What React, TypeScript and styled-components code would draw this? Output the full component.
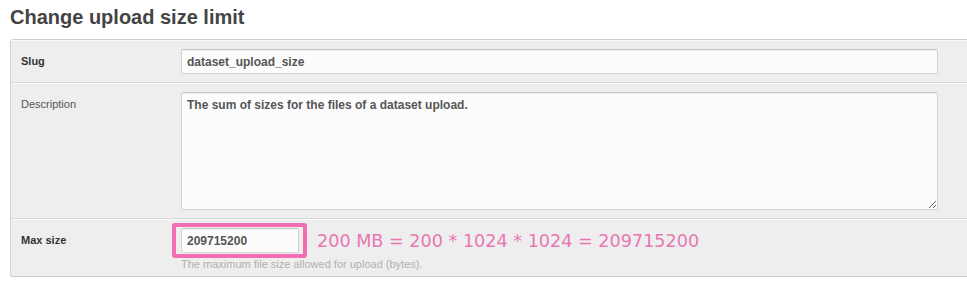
import React from "react";
import styled, { createGlobalStyle } from "styled-components";

const Global = createGlobalStyle`
  html, body { margin: 0; padding: 0; background: #fff; overflow: hidden; }
  body { font-family: "Liberation Sans", Arial, sans-serif; }
`;

const Page = styled.div`
  padding: 5px 0 0 10px;
  width: 980px;
`;

const Title = styled.h1`
  margin: 0 0 10px 0;
  font-size: 20px;
  line-height: 24px;
  font-weight: bold;
  color: #444;
`;

const Panel = styled.div`
  background: #eeeeee;
  border: 1px solid #cfcfcf;
  border-right: none;
  border-radius: 3px 0 0 3px;
`;

const Row = styled.div<{ $last?: boolean }>`
  display: flex;
  padding: 8px 0 ${(p) => (p.$last ? "5px" : "8px")} 10px;
  border-top: 1px solid #fafafa;
  border-bottom: ${(p) => (p.$last ? "none" : "1px solid #d8d8d8")};
`;

const Label = styled.div<{ $bold?: boolean }>`
  width: 160px;
  flex: none;
  font-size: 11px;
  line-height: 24px;
  font-weight: ${(p) => (p.$bold ? "bold" : "normal")};
  color: ${(p) => (p.$bold ? "#333" : "#555")};
`;

const Field = styled.div`
  width: 757px;
  flex: none;
`;

const inputBase = `
  box-sizing: border-box;
  border: 1px solid #d2d2d2;
  border-top-color: #c4c4c4;
  border-radius: 2px;
  background: #fcfcfc;
  box-shadow: inset 0 1px 2px rgba(0,0,0,0.06);
  font-family: "Liberation Sans", Arial, sans-serif;
  font-size: 12px;
  font-weight: bold;
  color: #555;
  padding: 0 5px;
  outline: none;
`;

const TextInput = styled.input<{ $w?: number }>`
  ${inputBase}
  display: block;
  width: ${(p) => (p.$w ? `${p.$w}px` : "100%")};
  height: 25px;
`;

const TextArea = styled.textarea`
  ${inputBase}
  display: block;
  width: 100%;
  height: 118px;
  padding: 5px;
  resize: both;
`;

const InlineRow = styled.div`
  display: flex;
  align-items: center;
  gap: 18px;
`;

const Highlight = styled.div`
  position: relative;
`;

const PinkBox = styled.div`
  position: absolute;
  left: -9px;
  top: -5px;
  right: -8px;
  bottom: -5px;
  border: 4px solid #f26db2;
  border-radius: 3px;
  pointer-events: none;
`;

const Note = styled.span`
  font-family: "DejaVu Sans", sans-serif;
  font-size: 17.6px;
  line-height: 20px;
  color: #e878b4;
`;

const Help = styled.div`
  margin-top: 5px;
  font-size: 11px;
  line-height: 13px;
  color: #b0b0b0;
`;

export default function App() {
  return (
    <Page>
      <Global />
      <Title>Change upload size limit</Title>
      <Panel>
        <Row>
          <Label $bold>Slug</Label>
          <Field>
            <TextInput readOnly value="dataset_upload_size" />
          </Field>
        </Row>
        <Row>
          <Label>Description</Label>
          <Field>
            <TextArea readOnly value="The sum of sizes for the files of a dataset upload." />
          </Field>
        </Row>
        <Row $last>
          <Label $bold>Max size</Label>
          <Field>
            <InlineRow>
              <Highlight>
                <TextInput readOnly value="209715200" $w={118} />
                <PinkBox />
              </Highlight>
              <Note>200 MB = 200 * 1024 * 1024 = 209715200</Note>
            </InlineRow>
            <Help>The maximum file size allowed for upload (bytes).</Help>
          </Field>
        </Row>
      </Panel>
    </Page>
  );
}
